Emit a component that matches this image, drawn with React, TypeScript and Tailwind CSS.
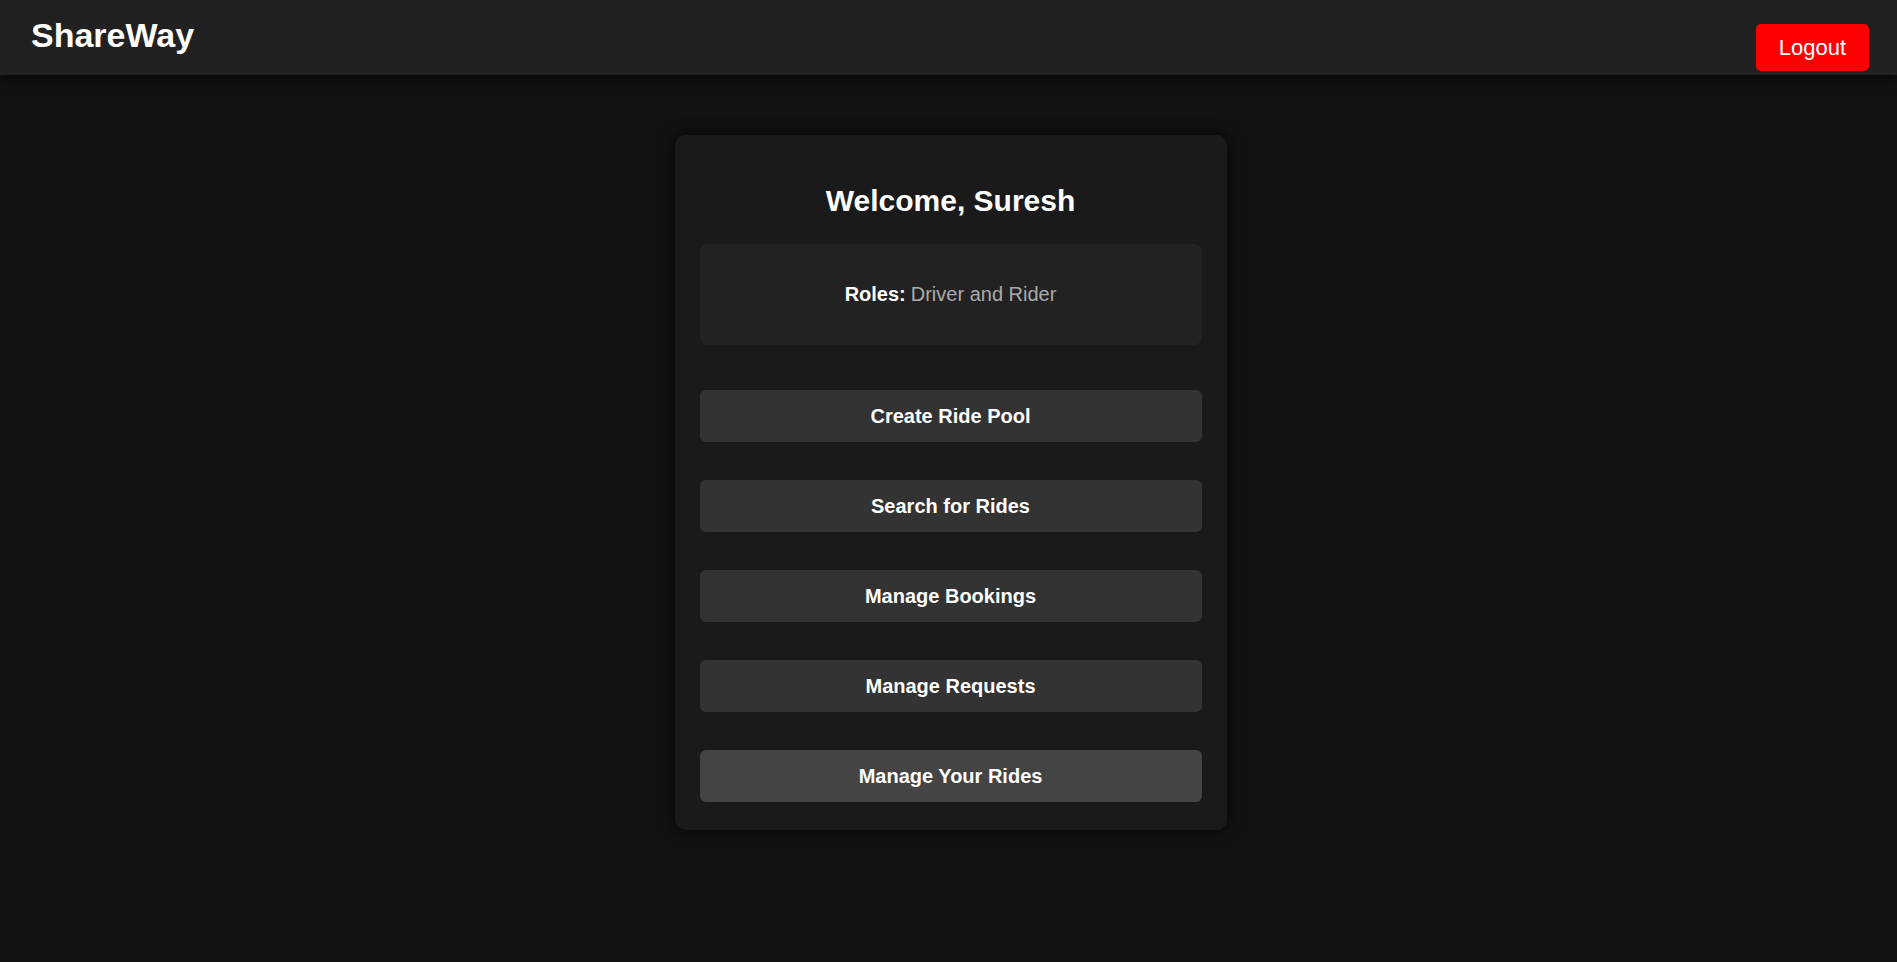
import React from "react";

const buttons = [
  { label: "Create Ride Pool", bg: "bg-[#333333]" },
  { label: "Search for Rides", bg: "bg-[#333333]" },
  { label: "Manage Bookings", bg: "bg-[#333333]" },
  { label: "Manage Requests", bg: "bg-[#333333]" },
  { label: "Manage Your Rides", bg: "bg-[#444444]" },
];

export default function App() {
  return (
    <div
      className="min-h-screen bg-[#121212] text-white"
      style={{ fontFamily: '"Liberation Sans", Arial, sans-serif' }}
    >
      <header className="relative z-10 flex h-[75px] items-start justify-between bg-[#212121] pl-[31px] pr-[28px] shadow-[0_4px_12px_rgba(0,0,0,0.7)]">
        <h1 className="pt-[16px] text-[34px] font-bold leading-[39px] text-white">ShareWay</h1>
        <button className="mt-[24px] h-[47px] w-[113px] rounded-[5px] bg-[#ff0000] text-[22px] leading-[25px] text-white">
          Logout
        </button>
      </header>
      <main className="flex justify-center pt-[60px]">
        <div className="ml-[4px] flex w-[552px] flex-col rounded-[10px] bg-[#1a1a1a] px-[25px] pt-[25px] pb-[28px] shadow-[0_0_16px_rgba(0,0,0,0.8)]">
          <h2 className="mt-[24px] text-center text-[30px] font-bold leading-[34px] text-white">
            Welcome, Suresh
          </h2>
          <div className="mt-[26px] flex h-[101px] items-center justify-center rounded-[8px] bg-[#222222] text-[20px] leading-[23px]">
            <span className="font-bold text-white">Roles:</span>
            <span className="ml-[5px] text-[#aaaaaa]">Driver and Rider</span>
          </div>
          <div className="mt-[45px] flex flex-col gap-[38px]">
            {buttons.map((b) => (
              <button
                key={b.label}
                className={`h-[52px] w-full rounded-[6px] ${b.bg} text-[20px] font-bold leading-[23px] text-white`}
              >
                {b.label}
              </button>
            ))}
          </div>
        </div>
      </main>
    </div>
  );
}
